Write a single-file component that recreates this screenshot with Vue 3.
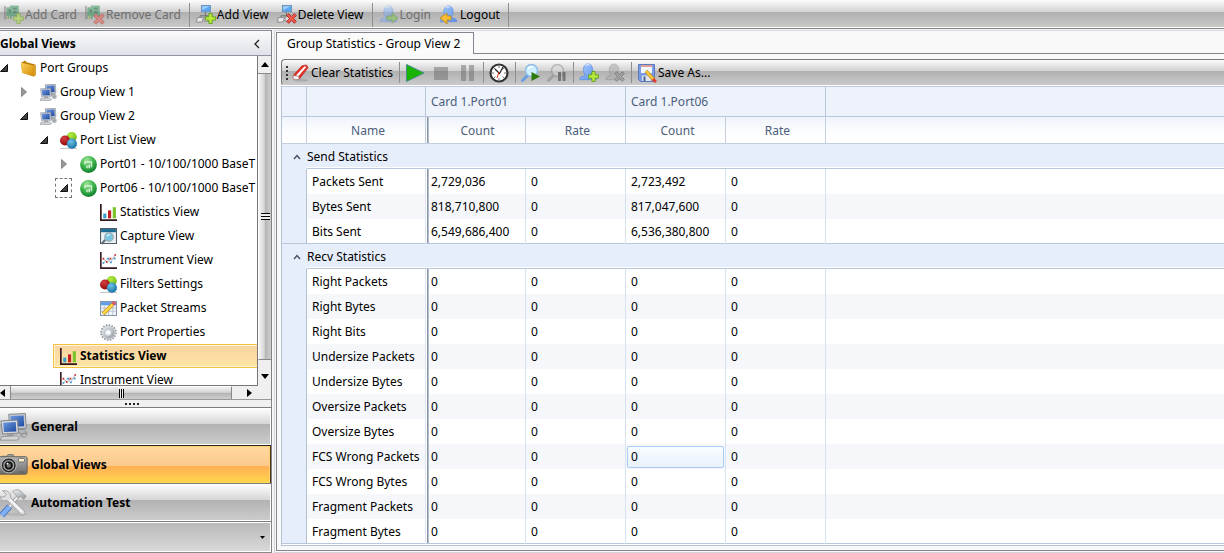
<script setup>
const topTools = [
  [
    { label: 'Add Card', icon: 'card-add', disabled: true },
    { label: 'Remove Card', icon: 'card-remove', disabled: true },
  ],
  [
    { label: 'Add View', icon: 'view-add' },
    { label: 'Delete View', icon: 'view-delete' },
  ],
  [
    { label: 'Login', icon: 'login', disabled: true },
    { label: 'Logout', icon: 'logout' },
  ],
]

const viewTools = [
  [
    { name: 'Start', icon: 'play' },
    { name: 'Stop', icon: 'stop', disabled: true },
    { name: 'Pause', icon: 'pause', disabled: true },
  ],
  [{ name: 'Timer', icon: 'clock' }],
  [
    { name: 'Start capture', icon: 'find-play' },
    { name: 'Pause capture', icon: 'find-pause', disabled: true },
  ],
  [
    { name: 'Add user', icon: 'user-add' },
    { name: 'Remove user', icon: 'user-remove', disabled: true },
  ],
]

const tree = [
  { label: 'Port Groups', icon: 'folder', level: 0, state: 'open' },
  { label: 'Group View 1', icon: 'computers', level: 1, state: 'closed' },
  { label: 'Group View 2', icon: 'computers', level: 1, state: 'open' },
  { label: 'Port List View', icon: 'balls', level: 2, state: 'open' },
  { label: 'Port01 - 10/100/1000 BaseT', icon: 'port', level: 3, state: 'closed' },
  { label: 'Port06 - 10/100/1000 BaseT', icon: 'port', level: 3, state: 'open', focus: true },
  { label: 'Statistics View', icon: 'bars', level: 4 },
  { label: 'Capture View', icon: 'capture', level: 4 },
  { label: 'Instrument View', icon: 'plot', level: 4 },
  { label: 'Filters Settings', icon: 'balls', level: 4 },
  { label: 'Packet Streams', icon: 'streams', level: 4 },
  { label: 'Port Properties', icon: 'gear', level: 4 },
  { label: 'Statistics View', icon: 'bars', level: 2, selected: true },
  { label: 'Instrument View', icon: 'plot', level: 2 },
]

const sections = [
  { label: 'General', icon: 'computers' },
  { label: 'Global Views', icon: 'camera', active: true },
  { label: 'Automation Test', icon: 'tools' },
]

const zero = (name) => ({ name, values: ['0', '0', '0', '0'] })
const groups = [
  {
    title: 'Send Statistics',
    rows: [
      { name: 'Packets Sent', values: ['2,729,036', '0', '2,723,492', '0'] },
      { name: 'Bytes Sent', values: ['818,710,800', '0', '817,047,600', '0'] },
      { name: 'Bits Sent', values: ['6,549,686,400', '0', '6,536,380,800', '0'] },
    ],
  },
  {
    title: 'Recv Statistics',
    rows: [
      'Right Packets', 'Right Bytes', 'Right Bits', 'Undersize Packets', 'Undersize Bytes',
      'Oversize Packets', 'Oversize Bytes', 'FCS Wrong Packets', 'FCS Wrong Bytes',
      'Fragment Packets', 'Fragment Bytes',
    ].map(zero),
  },
]
const isCurrent = (row, i) => row.name === 'FCS Wrong Packets' && i === 2
</script>

<template>
  <div class="app">
    <svg class="defs" aria-hidden="true">
      <defs>
        <linearGradient id="gBlue" x1="0" y1="0" x2="1" y2="1"><stop offset="0" stop-color="#a8ccff" /><stop offset="1" stop-color="#5a90e8" /></linearGradient>
        <linearGradient id="gScreen" x1="0" y1="0" x2="1" y2="1"><stop offset="0" stop-color="#6f9ae0" /><stop offset="1" stop-color="#1d49a0" /></linearGradient>
        <linearGradient id="gFolder" x1="0" y1="0" x2="1" y2="1"><stop offset="0" stop-color="#ffd25a" /><stop offset="1" stop-color="#d18a06" /></linearGradient>
        <linearGradient id="gMetal" x1="0" y1="0" x2="1" y2="1"><stop offset="0" stop-color="#f4f4f4" /><stop offset="1" stop-color="#8f959b" /></linearGradient>
        <radialGradient id="gGreen" cx=".4" cy=".25" r=".8"><stop offset="0" stop-color="#9fe89a" /><stop offset=".5" stop-color="#3db44d" /><stop offset="1" stop-color="#0c7a2c" /></radialGradient>
        <radialGradient id="gRed" cx=".4" cy=".3" r=".7"><stop offset="0" stop-color="#d84040" /><stop offset="1" stop-color="#8e0808" /></radialGradient>
        <radialGradient id="gLime" cx=".4" cy=".3" r=".7"><stop offset="0" stop-color="#b6ec45" /><stop offset="1" stop-color="#6cb90e" /></radialGradient>
        <radialGradient id="gSea" cx=".4" cy=".3" r=".7"><stop offset="0" stop-color="#6fc0e4" /><stop offset="1" stop-color="#1a74a8" /></radialGradient>
        <linearGradient id="gBody" x1="0" y1="0" x2="0" y2="1"><stop offset="0" stop-color="#b4b4b4" /><stop offset="1" stop-color="#6d6d6d" /></linearGradient>
      </defs>

      <symbol id="plus" viewBox="0 0 10 10"><path d="M3.500.5h3v3h3v3h-3v3h-3v-3h-3v-3h3z" fill="#b8ea3c" stroke="#5c9d1a" stroke-width=".8" /></symbol>
      <symbol id="cross" viewBox="0 0 10 10"><path d="M2.400.6 5 3.200 7.600.6l1.800 1.800L6.800 5l2.600 2.600-1.800 1.800L5 6.800 2.400 9.400.6 7.600 3.200 5 .6 2.400z" fill="#ec5c4c" stroke="#b82020" stroke-width=".8" /></symbol>
      <symbol id="cross-gray" viewBox="0 0 10 10"><path d="M2.400.6 5 3.200 7.600.6l1.800 1.800L6.800 5l2.600 2.600-1.800 1.800L5 6.800 2.400 9.400.6 7.600 3.200 5 .6 2.400z" fill="#888" stroke="#444" stroke-width=".8" /></symbol>
      <symbol id="board" viewBox="0 0 20 20"><path d="M1 1v15" stroke="#777" stroke-width="2" /><path d="M3 3h4V1h9v11H8v3H3z" fill="#2c9a57" stroke="#166d37" stroke-width=".6" /><path d="M5 5h3v3H5zM10 3h4v2h-4zM10 7h4v2h-4z" fill="#123f28" /><path d="M4 12v4M6 12v4" stroke="#d7c55b" /></symbol>
      <symbol id="network" viewBox="0 0 20 20"><path d="M10.500 8v4M4.500 15v-3h9" fill="none" stroke="#686868" /><rect x="6" y=".5" width="10" height="7" fill="#5ba6ee" stroke="#6c8fb8" /><path d="M7 1.500h8l-8 4z" fill="#a3d4ff" /><path d="M1.500 14h7l-2 5H.5z" fill="#e8e8e8" stroke="#888" /><path d="M9 13h6v5H9z" fill="#ddd" stroke="#888" /></symbol>
      <symbol id="person" viewBox="0 0 20 20"><path d="M.8 18.500c0-3 2-3.500 6-4.500l-.3-1.500C3.500 9 4.500 1 10 1s6.500 8 3.500 11.500l-.3 1.500c4 1 6 1.500 6 4.500z" fill="url(#gBlue)" stroke="#5f8cda" stroke-width=".8" /><path d="M7 3c2-2 4-1 5-.5" fill="none" stroke="#d3e6ff" stroke-width="1.500" /></symbol>
      <symbol id="lens" viewBox="0 0 20 20"><path d="M7 12 1.500 17.500" stroke="#6b9fe0" stroke-width="3" stroke-linecap="round" /><circle cx="10.500" cy="7.500" r="6" fill="#cceeff" stroke="#8bbde8" stroke-width="1.400" /><path d="M7 6c1-2 3-3 5-2" fill="none" stroke="#fff" stroke-width="1.500" /></symbol>

      <symbol id="card-add" viewBox="0 0 20 20"><use href="#board" width="18" height="18" /><use href="#plus" x="9" y="8" width="11" height="11" /></symbol>
      <symbol id="card-remove" viewBox="0 0 20 20"><use href="#board" width="18" height="18" /><use href="#cross" x="8" y="8" width="12" height="12" /></symbol>
      <symbol id="view-add" viewBox="0 0 20 20"><use href="#network" width="18" height="18" /><use href="#plus" x="9" y="8" width="11" height="11" /></symbol>
      <symbol id="view-delete" viewBox="0 0 20 20"><use href="#network" width="18" height="18" /><use href="#cross" x="9" y="8" width="11" height="11" /></symbol>
      <symbol id="login" viewBox="0 0 20 20"><use href="#person" width="19" height="18" /><path d="M8 11h5V8l6 5-6 5v-3H8z" fill="#79c54b" stroke="#3b8722" stroke-width=".8" /></symbol>
      <symbol id="logout" viewBox="0 0 20 20"><use href="#person" width="19" height="18" /><path d="M12 11H8V8l-7 5 7 6v-4h4z" fill="#f6bd37" stroke="#b98414" stroke-width=".8" /></symbol>

      <symbol id="play" viewBox="0 0 20 20"><path d="M1.500 1.500 19 10 1.500 18.500z" fill="#19b400" stroke="#4b8a8c" /></symbol>
      <symbol id="stop" viewBox="0 0 20 20"><path d="M3 4h14v13H3z" fill="#6d6d6d" /></symbol>
      <symbol id="pause" viewBox="0 0 20 20"><path d="M4 2h5v16H4zM12 2h5v16h-5z" fill="#6d6d6d" /></symbol>
      <symbol id="clock" viewBox="0 0 20 20"><circle cx="10" cy="10" r="8.500" fill="#fff" stroke="#333" stroke-width="2.200" /><path d="M10 3v2M10 15v2M3 10h2M15 10h2M5 5l1.500 1.500M15 5l-1.500 1.500M5 15l1.500-1.500M15 15l-1.500-1.500" stroke="#777" /><path d="M6 6l4.500 4.500L14 4" fill="none" stroke="#222" stroke-width="1.200" /><path d="M10 9 8 15" stroke="#dc2a1a" /></symbol>
      <symbol id="find-play" viewBox="0 0 20 20"><use href="#lens" width="20" height="20" /><path d="M10.500 9 19 13.500 10.500 18z" fill="#2c7a0a" /></symbol>
      <symbol id="find-pause" viewBox="0 0 20 20"><path d="M7 12 1.500 17.500" stroke="#888" stroke-width="3" stroke-linecap="round" /><circle cx="10.500" cy="7.500" r="6" fill="#d8d8d8" stroke="#888" stroke-width="1.400" /><path d="M11 9h3v9h-3zM15.500 9h3v9h-3z" fill="#333" /></symbol>
      <symbol id="user-add" viewBox="0 0 20 20"><use href="#person" width="18" height="18" /><use href="#plus" x="9" y="8" width="11" height="11" /></symbol>
      <symbol id="user-remove" viewBox="0 0 20 20"><path d="M.8 16.700c0-2.700 1.800-3.200 5.400-4.100l-.3-1.300C3.200 8 4 1 9 1s5.800 7 3.100 10.300l-.3 1.300c3.600.9 5.400 1.400 5.400 4.100z" fill="#aaa" stroke="#777" stroke-width=".8" /><use href="#cross-gray" x="9" y="8" width="11" height="11" /></symbol>
      <symbol id="eraser" viewBox="0 0 20 20"><ellipse cx="10" cy="18" rx="8" ry="1.500" fill="#aaa" /><path d="m1 13 10-11 5-1 2 3L8 17l-6 0z" fill="#e03028" stroke="#b01a16" stroke-width=".6" /><path d="M4.500 12.500 14 2.500l2 .8L7 13.500z" fill="#fff" /><path d="m1 13 6 .5L8 17l-6 .3z" fill="#f5f5f5" stroke="#999" stroke-width=".6" /></symbol>
      <symbol id="save" viewBox="0 0 20 20"><path d="M1.500 1.500h16v17h-14l-2-2z" fill="#7c9be2" stroke="#5a78be" /><path d="M4 2h11v8H4z" fill="#f3f7ff" /><path d="M4 2h11v2H4z" fill="#e0a096" /><path d="M5 12.500h9V18H5z" fill="#dfe3ec" /><path d="M6.500 13.500h2V18h-2z" fill="#47629c" /><path d="m9 8 8 9" stroke="#c08a20" stroke-width="3.600" /><path d="m9 8 8 9" stroke="#f9c83c" stroke-width="2.600" /><path d="m16 16 3 3" stroke="#e13c32" stroke-width="3" /></symbol>

      <symbol id="folder" viewBox="0 0 16 16"><path d="M1 2.500 5 .5l1 1.500 7.500 2L14.800 5v9L13 15.500 2 12z" fill="#b97a05" /><path d="M1 2.500 12 5l1 10.500L2 12z" fill="url(#gFolder)" /><path d="M12 5l2.500-.5V14L13 15.500z" fill="#dfa024" /></symbol>
      <symbol id="computers" viewBox="0 0 32 32"><path d="M10 1.500 29 .5l1 17-19 1z" fill="#c4c8ce" stroke="#7b8088" /><path d="m12 3.500 15-.7.6 12.200-15 .8z" fill="url(#gScreen)" /><path d="m20 19 8 0 3 4-8 1z" fill="#b4b7ba" stroke="#85898d" /><path d="m1 9 19-1 1 15-18 1z" fill="#d5d8dc" stroke="#777c84" /><path d="m3.500 11 14.500-.8.6 10.800-14 .8z" fill="url(#gScreen)" /><path d="M8 24h7v3H8z" fill="#9ca0a5" /><path d="m2 27 17-1 3 3-3 2H0z" fill="#d4d5d6" stroke="#898c90" /><path d="M23 26c2-3 4-1 5-3l3 2-3 3z" fill="#bcbfc2" stroke="#85898d" /></symbol>
      <symbol id="balls" viewBox="0 0 16 16"><path d="M0 15.500h16" stroke="#c7c7c7" /><circle cx="11" cy="4.800" r="4.800" fill="url(#gLime)" /><circle cx="4.800" cy="8" r="4.800" fill="url(#gRed)" /><circle cx="11.200" cy="11" r="4.800" fill="url(#gSea)" /></symbol>
      <symbol id="port" viewBox="0 0 16 16"><circle cx="8" cy="8" r="7.900" fill="url(#gGreen)" /><path d="M4 5h7.500v5.500H10V6.500H5.500V8H4z" fill="#dff5dd" opacity=".85" /><path d="M6 9h1.200v2.500H6zM8 8h1.300v3.500H8z" fill="#e8fbe6" /></symbol>
      <symbol id="bars" viewBox="0 0 16 16"><path d="M.8 0v15.200H16" fill="none" stroke="#35191c" stroke-width="1.600" /><path d="M3 9h3v4.500H3z" fill="#3b9fcd" /><path d="M7.500 6h3v7.500h-3z" fill="#c42020" /><path d="M12 3h3v10.500h-3z" fill="#7bc52a" /></symbol>
      <symbol id="capture" viewBox="0 0 16 16"><path d="M.5.5h15v14H.5z" fill="#eef2f4" stroke="#4f5c66" /><path d="M1 1h14v3H1z" fill="#1d6a95" /><path d="m5 11-3.500 4" stroke="#667077" stroke-width="2" /><circle cx="8.500" cy="8.500" r="4" fill="#79c6e4" stroke="#9cb1bc" stroke-width="1.300" /><path d="M6.500 8c.5-2 2-2 3-1.500" stroke="#e5f8ff" fill="none" /></symbol>
      <symbol id="plot" viewBox="0 0 16 16"><path d="M.8 0v15.200H16" fill="none" stroke="#35191c" stroke-width="1.500" /><path d="m3 6.500 4 3 3-3.500 1 1 4-4.500" fill="none" stroke="#d08a90" stroke-width=".7" /><path d="m3 10.500 4-4.500 3 4 2-4 3-.5" fill="none" stroke="#8dbfd4" stroke-width=".7" /><path d="M2.500 5.500H4V7H2.500zM5.500 8.500H7V10H5.500zM9 5.500h1.500V7H9zM13.500 2H15v1.500h-1.500z" fill="#ba2228" /><path d="M2.500 9.500H4V11H2.500zM7 5.500h1.500V7H7zM9.500 9H11v1.500H9.500zM13 5.500h1.500V7H13z" fill="#3b93bd" /></symbol>
      <symbol id="streams" viewBox="0 0 16 16"><path d="M.5 1.500h15v13H.5z" fill="#f4f6f9" stroke="#8496ad" /><path d="M1 2h14v3H1z" fill="#5f9de6" /><path d="M1 7.500h14M1 10.500h14M4 5v9M8 5v9M12 5v9" stroke="#bdc7d3" /><path d="m3 13 9-9" stroke="#a9780b" stroke-width="3.600" /><path d="m3 13 9-9" stroke="#ffd445" stroke-width="2.600" /><path d="m12 4 2-2" stroke="#dd5961" stroke-width="3.500" /></symbol>
      <symbol id="gear" viewBox="0 0 16 16"><circle cx="8" cy="8" r="6.900" fill="none" stroke="#8c94a0" stroke-width="1.800" stroke-dasharray="1.500 1.200" /><circle cx="8" cy="8" r="6" fill="url(#gMetal)" stroke="#c0c6cf" stroke-width=".6" /><circle cx="7.500" cy="8" r="3.400" fill="#e2e9f1" stroke="#aab2bc" stroke-width=".7" /><circle cx="8" cy="8" r="1.600" fill="#fff" /></symbol>
      <symbol id="camera" viewBox="0 0 32 32"><path d="M2 6h6l1-2h6l1 2" fill="#999" stroke="#777" /><rect x="-2" y="6.500" width="33" height="20" rx="2" fill="url(#gBody)" stroke="#555" /><circle cx="10" cy="16.500" r="8.500" fill="#292929" stroke="#ccc" /><circle cx="10" cy="16.500" r="5.500" fill="#111" stroke="#aaa" stroke-width="1.500" /><circle cx="10" cy="16.500" r="2.500" fill="#6f7479" /><circle cx="8.500" cy="14.500" r="1" fill="#fff" /><rect x="21" y="8.500" width="7" height="4" rx="1" fill="#fff2c9" stroke="#666" /><path d="M22 24h6" stroke="#555" /></symbol>
      <symbol id="tools" viewBox="0 0 32 32"><ellipse cx="18" cy="29" rx="13" ry="2" fill="#aaa" opacity=".5" /><path d="m11 20-9 10" stroke="#426fb7" stroke-width="7" /><path d="m11 20-9 10" stroke="#80b0f3" stroke-width="5" /><path d="m11 20 10-12" stroke="#888" stroke-width="4" /><path d="m11 20 10-12" stroke="#eee" stroke-width="2.500" /><path d="M14 3c5-4 10-2 12 2l4 3-3 4-4-4-3 2-3-5z" fill="url(#gMetal)" stroke="#909090" stroke-width=".8" /><path d="m3 2 4 4-2 3-5 0c1 5 6 5 8 4l16 16c3 2 6-1 4-4L12 10c1-4-2-9-9-8z" fill="#dedfe1" stroke="#8a8d91" stroke-width=".8" /><path d="m11 12 14 14" stroke="#fff" stroke-width="1.500" /></symbol>
    </svg>

    <header class="toolbar top">
      <div v-for="(set, s) in topTools" :key="s" class="set">
        <button v-for="t in set" :key="t.label" type="button" class="tool" :disabled="t.disabled">
          <svg class="i20" aria-hidden="true"><use :href="'#' + t.icon" /></svg>{{ t.label }}
        </button>
      </div>
    </header>

    <div class="main">
      <aside class="side">
        <div class="side-head">
          <h2>Global Views</h2>
          <button type="button" class="collapse" aria-label="Collapse panel">
            <svg width="6" height="10" viewBox="0 0 6 10"><path d="M5 1 1 5l4 4" fill="none" stroke="#222" stroke-width="1.300" /></svg>
          </button>
        </div>

        <div class="tree-pane">
          <ul class="tree">
            <li v-for="(n, i) in tree" :key="i" :class="['lv' + n.level, { selected: n.selected }]">
              <button v-if="n.state" type="button" class="twist" :class="{ focus: n.focus }" :aria-label="n.state === 'open' ? 'Collapse' : 'Expand'">
                <svg v-if="n.state === 'open'" width="8" height="8" viewBox="0 0 8 8"><path d="M7.500.5v7h-7z" fill="#404040" stroke="#111" /></svg>
                <svg v-else width="8" height="10" viewBox="0 0 8 10"><path d="M1.500.5v9L6.500 5z" fill="#989898" stroke="#888" /></svg>
              </button>
              <span v-else class="twist"></span>
              <a href="#" class="node"><svg class="i17" aria-hidden="true"><use :href="'#' + n.icon" /></svg>{{ n.label }}</a>
            </li>
          </ul>
          <div class="vbar">
            <button type="button" class="arrow" aria-label="Scroll up"><svg width="8" height="5" viewBox="0 0 8 5"><path d="M4 0l4 5H0z" /></svg></button>
            <div class="thumb"><i class="ridges"></i></div>
            <button type="button" class="arrow down" aria-label="Scroll down"><svg width="8" height="5" viewBox="0 0 8 5"><path d="M4 5l4-5H0z" /></svg></button>
          </div>
        </div>
        <div class="hbar">
          <button type="button" class="arrow" aria-label="Scroll left"><svg width="5" height="8" viewBox="0 0 5 8"><path d="M0 4l5-4v8z" /></svg></button>
          <div class="thumb"><i class="ridges"></i></div>
          <button type="button" class="arrow right" aria-label="Scroll right"><svg width="5" height="8" viewBox="0 0 5 8"><path d="M5 4L0 0v8z" /></svg></button>
        </div>
        <div class="split"><i v-for="d in 4" :key="d"></i></div>

        <nav class="sections">
          <button v-for="s in sections" :key="s.label" type="button" class="section" :class="{ active: s.active }">
            <svg class="i32" aria-hidden="true"><use :href="'#' + s.icon" /></svg>{{ s.label }}
          </button>
          <div class="more">
            <button type="button" aria-label="More sections"><svg width="5" height="3" viewBox="0 0 5 3"><path d="M0 0h5L2.500 3z" /></svg></button>
          </div>
        </nav>
      </aside>

      <main class="content">
        <div class="tabs"><button type="button" class="tab">Group Statistics - Group View 2</button></div>
        <div class="page">
          <div class="toolbar inner">
            <span class="grip"></span>
            <div class="set">
              <button type="button" class="tool clear"><svg class="i18" aria-hidden="true"><use href="#eraser" /></svg>Clear Statistics</button>
            </div>
            <div v-for="(set, s) in viewTools" :key="s" class="set">
              <button v-for="t in set" :key="t.name" type="button" class="tool" :disabled="t.disabled" :aria-label="t.name">
                <svg class="i20" aria-hidden="true"><use :href="'#' + t.icon" /></svg>
              </button>
            </div>
            <div class="set">
              <button type="button" class="tool"><svg class="i20" aria-hidden="true"><use href="#save" /></svg>Save As...</button>
            </div>
          </div>

          <div class="grid">
            <table>
              <colgroup>
                <col class="c-exp" /><col class="c-name" /><col class="c-val" /><col class="c-val" /><col class="c-val" /><col class="c-val" /><col />
              </colgroup>
              <thead>
                <tr class="bands"><td></td><td></td><th colspan="2">Card 1.Port01</th><th colspan="2">Card 1.Port06</th><td></td></tr>
                <tr class="cols"><td></td><th>Name</th><th class="frozen">Count</th><th>Rate</th><th>Count</th><th>Rate</th><td></td></tr>
              </thead>
              <tbody v-for="g in groups" :key="g.title">
                <tr class="group">
                  <td><button type="button" class="fold" :aria-label="'Collapse ' + g.title"><svg width="8" height="6" viewBox="0 0 8 6"><path d="M1 5l3-3.500L7 5" fill="none" stroke="#3f5068" stroke-width="1.400" /></svg></button></td>
                  <th colspan="6">{{ g.title }}</th>
                </tr>
                <tr v-for="r in g.rows" :key="r.name" class="row">
                  <td class="gutter"></td>
                  <td class="name">{{ r.name }}</td>
                  <td v-for="(v, i) in r.values" :key="i" :class="{ frozen: i === 0, current: isCurrent(r, i) }"><span>{{ v }}</span></td>
                  <td class="rest"></td>
                </tr>
              </tbody>
            </table>
          </div>
        </div>
      </main>
    </div>
  </div>
</template>

<style>
body { margin: 0; }
</style>

<style scoped>
* { box-sizing: border-box; }
.app {
  display: flex;
  flex-direction: column;
  height: 100vh;
  overflow: hidden;
  background: #f6f6f8;
  color: #000;
  font: 12px/16px "Noto Sans", "Open Sans", sans-serif;
}
.defs { position: absolute; width: 0; height: 0; }
button { font: inherit; color: inherit; border: 0; padding: 0; margin: 0; background: none; }
svg { display: block; flex: none; }
.i17 { width: 17px; height: 17px; }
.i18 { width: 18px; height: 18px; }
.i20 { width: 20px; height: 20px; }
.i32 { width: 28px; height: 32px; }

.toolbar {
  display: flex;
  align-items: center;
  flex: none;
  background: linear-gradient(#fcfcfc 0, #d0d0d0 44%, #b0b0b0 44%, #cacaca 100%);
  border-bottom: 1px solid #fff;
}
.toolbar.top { height: 29px; padding-top: 1px; border-bottom: 1px solid #808080; box-shadow: inset 0 -1px #fff; }
.set { display: flex; align-items: center; }
.top .set { gap: 6px; height: 24px; padding: 0 6px; border-right: 1px solid #8e8e8e; }
.top .set:first-child { padding-left: 4px; }
.tool { display: flex; align-items: center; gap: 1px; white-space: nowrap; }
.top .tool { padding-right: 2px; }
.tool:disabled { color: #6e6e6e; }
.tool:disabled svg { opacity: .5; }

.main { flex: 1; min-height: 0; display: flex; gap: 2px; padding-top: 1px; }

.side { flex: none; width: 272px; display: flex; flex-direction: column; min-height: 0; border-top: 1px solid #8b8b95; border-right: 1px solid #808086; }
.side-head { flex: none; display: flex; align-items: center; justify-content: space-between; height: 25px; padding: 1px 11px 0 0; border-bottom: 1px solid #8d93a0; background: linear-gradient(#fafafb, #e0e2e8); }
.side-head h2 { margin: 0; font-size: 12px; font-weight: 700; }

.tree-pane { flex: 1; min-height: 0; display: flex; }
.tree { flex: 1; min-width: 0; margin: 0; padding: 0; list-style: none; overflow: hidden; background: #fff; border-right: 1px solid #777; border-bottom: 1px solid #777; }
.tree li { display: flex; align-items: center; height: 24px; white-space: nowrap; }
.lv0 .twist { margin-left: -5px; }
.lv1 .twist { margin-left: 15px; }
.lv2 .twist { margin-left: 35px; }
.lv3 .twist { margin-left: 55px; }
.lv4 .twist { margin-left: 75px; }
.twist { flex: none; display: grid; place-items: center; width: 17px; height: 20px; margin-right: 8px; }
.twist.focus { padding-left: 1px; outline: 1px dashed #777; outline-offset: -1px; }
.node { display: flex; align-items: center; gap: 3px; color: inherit; text-decoration: none; }
.tree li.selected { margin-left: 53px; border: 1px solid #f6c13c; border-right: 0; box-shadow: inset 1px 1px #fff4dc, inset 0 -1px #fff4dc; background: linear-gradient(#fbd3a2, #fde5a4); font-weight: 700; }
.tree li.selected .twist { width: 6px; margin: 0; }

.arrow { display: grid; place-items: center; flex: none; }
.vbar { flex: none; width: 13px; display: flex; flex-direction: column; background: #efefef; }
.vbar .arrow { height: 18px; border-bottom: 1px solid #888; }
.vbar .down { height: 26px; border: 0; padding-top: 6px; }
.vbar .thumb { flex: 1; display: grid; place-items: center; border-bottom: 1px solid #888; border-left: 1px solid #fff; background: linear-gradient(90deg, #f4f4f4, #d4d4d4 45%, #b4b4b4 50%, #cecece); }
.vbar .ridges { width: 9px; height: 7px; background: repeating-linear-gradient(#000 0 1px, #eee 1px 3px); }
.hbar { flex: none; height: 14px; display: flex; background: #efefef; border-bottom: 1px solid #999; }
.hbar .arrow { width: 11px; justify-items: start; border-right: 1px solid #888; }
.hbar .right { width: 39px; border: 0; padding-left: 15px; }
.hbar .thumb { flex: 1; display: grid; place-items: center; border-right: 1px solid #888; border-top: 1px solid #fff; background: linear-gradient(#f2f2f2, #d4d4d4 45%, #b4b4b4 50%, #cecece); }
.hbar .ridges { width: 5px; height: 9px; background: repeating-linear-gradient(90deg, #000 0 1px, #eee 1px 2px); }
.split { flex: none; height: 7px; display: flex; align-items: center; justify-content: center; gap: 2px; padding-right: 8px; background: #f0f0f0; }
.split i { width: 2px; height: 2px; background: #222; }

.sections { flex: none; display: flex; flex-direction: column; }
.section { display: flex; align-items: center; gap: 3px; height: 38px; overflow: hidden; border-top: 1px solid #7d7d7d; box-shadow: inset -1px 1px #fff, inset 0 -1px #fff; background: linear-gradient(#fff, #d6d6d6 43%, #b2b2b2 43%, #cdcdcd); font-weight: 700; }
.section.active { border-top: 1px solid #2d261c; border-right: 1px solid #4c3a16; box-shadow: inset -1px 1px #ffd070; background: linear-gradient(#ffd9a0, #fcc98c 54%, #ffad55 54%, #ffd74c); }
.more { display: flex; align-items: center; justify-content: flex-end; height: 32px; padding-right: 6px; border-top: 1px solid #7d7d7d; border-bottom: 1px solid #8b8b8b; box-shadow: inset -1px 1px #fff, inset 0 -1px #fff; background: linear-gradient(#b8b8b8, #dadada); }

.content { flex: 1; min-width: 0; display: flex; flex-direction: column; border-top: 1px solid #ddd9e2; border-left: 1px solid #d5d3dc; border-bottom: 1px solid #d6d6da; padding: 1px 0 1px 1px; background: #f9f9fa; }
.tabs { flex: none; display: flex; height: 22px; }
.tabs::after { content: ""; flex: 1; border-bottom: 1px solid #85858f; }
.tab { height: 22px; padding: 0 13px 0 10px; border: 1px solid #85858f; border-bottom: 0; background: #fbfbfc; white-space: nowrap; }
.page { flex: 1; min-height: 0; display: flex; flex-direction: column; padding: 5px 0 4px 4px; border-left: 1px solid #85858f; border-bottom: 1px solid #85858f; }
.toolbar.inner { height: 27px; border-top: 1px solid #777; border-left: 1px solid #777; border-radius: 4px 0 0 4px; }
.inner .grip { width: 2px; height: 14px; margin: 0 4px 0 4px; background: repeating-linear-gradient(#333 0 2px, transparent 2px 4px); }
.inner .set { height: 21px; gap: 6px; padding: 0 6px 0 5px; border-right: 1px solid #8e8e8e; }
.inner .set:nth-child(2) { padding-left: 0; }
.inner .set:last-child { border: 0; }

.grid { flex: 1; min-height: 0; overflow: hidden; border-left: 1px solid #b6c4d8; border-bottom: 1px solid #b6c4d8; background: #fff; }
table { width: 100%; table-layout: fixed; border-collapse: separate; border-spacing: 0; }
.c-exp { width: 25px; }
.c-name { width: 119px; }
.c-val { width: 100px; }
td, th { padding: 0; font-weight: 400; text-align: left; white-space: nowrap; height: 25px; }
.bands td, .bands th { height: 31px; padding-left: 5px; border-top: 1px solid #c0cbe0; border-right: 1px solid #b8c6d9; border-bottom: 1px solid #b8c8dc; background: #eef3fb; color: #4c607a; }
.cols td, .cols th { height: 27px; padding: 2px 0 0 4px; border-right: 1px solid #c3cfdf; border-bottom: 1px solid #c3cfdf; background: linear-gradient(#eff4fc, #fff 70%); color: #4c607a; text-align: center; }
.cols th.frozen { background: linear-gradient(90deg, transparent 1px, #8794a6 1px 2px, #b5bfcc 2px 3px, transparent 3px), linear-gradient(#eff4fc, #fff 70%); }
.bands td:last-child, .cols td:last-child { border-right: 0; }
.group td, .group th { background: #e7eefb; }
.group th { padding-top: 2px; border-bottom: 1px solid #b8c8dc; box-shadow: inset 0 -1px #fff; }
.fold { display: grid; place-items: center; width: 29px; height: 24px; }
.row .gutter { background: #e7eefb; border-right: 1px solid #b2c0d2; }
.row .name { padding-left: 5px; border-right: 1px solid #dde5f0; }
.row td { border-right: 1px solid #d5e2f1; }
.row .rest { border-right: 0; }
.row td > span { display: block; padding-left: 5px; }
.row:nth-child(odd) td:not(.gutter) { background-color: #f5f7fb; }
.row .frozen { background-image: linear-gradient(90deg, #fff 1px, #8794a6 1px 2px, #b5bfcc 2px 3px, transparent 3px); }
.row:last-child td { box-shadow: inset 0 -1px #b8c8dc; }
.row .current { padding: 1px; }
.row .current > span { height: 22px; padding: 2px 0 0 3px; border: 1px solid #a8ccf4; border-radius: 2px; background: linear-gradient(#fafcff, #e8f1fd); }
</style>
